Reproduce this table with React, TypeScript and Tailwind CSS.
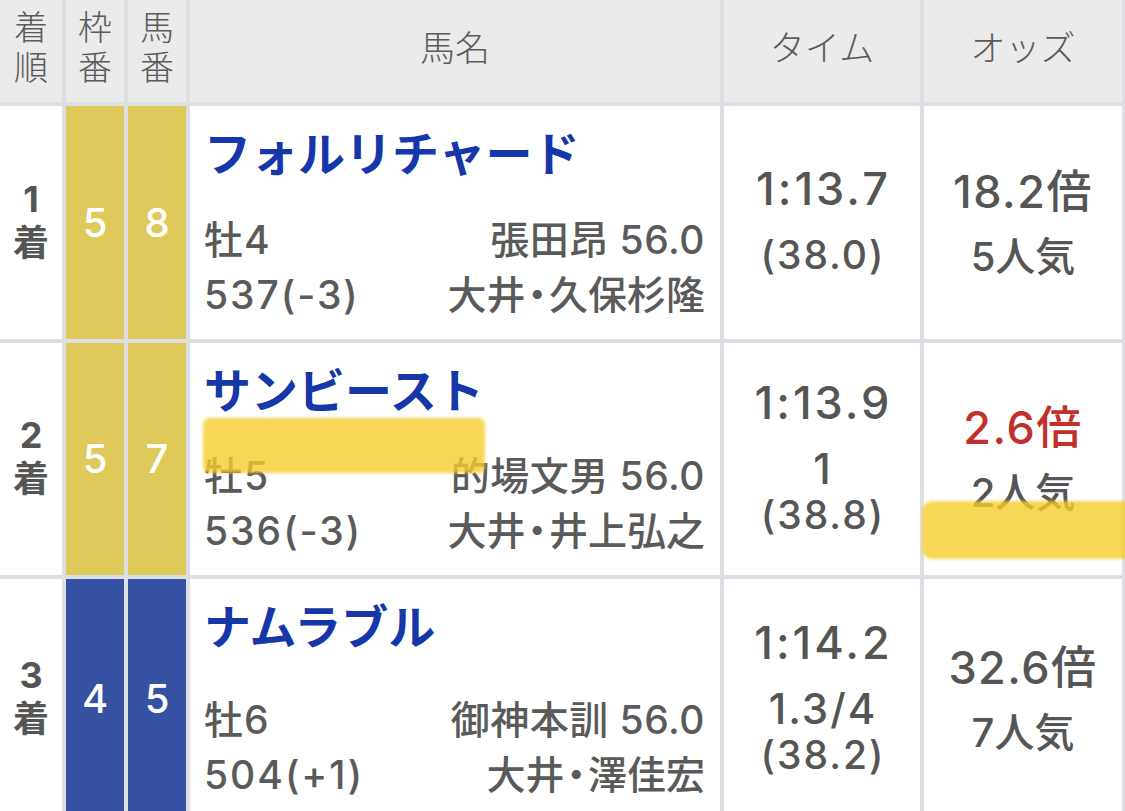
import React from "react";

interface ResultRow {
  rank: string;
  waku: number;
  uma: number;
  wakuColor: "yellow" | "blue";
  name: string;
  sexAge: string;
  jockey: string;
  weight: string;
  trainer: string;
  time: string;
  margin?: string;
  last3f: string;
  odds: string;
  popularity: string;
  favorite?: boolean;
}

const rows: ResultRow[] = [
  {
    rank: "1",
    waku: 5,
    uma: 8,
    wakuColor: "yellow",
    name: "フォルリチャード",
    sexAge: "牡4",
    jockey: "張田昂 56.0",
    weight: "537(-3)",
    trainer: "大井・久保杉隆",
    time: "1:13.7",
    last3f: "(38.0)",
    odds: "18.2倍",
    popularity: "5人気",
  },
  {
    rank: "2",
    waku: 5,
    uma: 7,
    wakuColor: "yellow",
    name: "サンビースト",
    sexAge: "牡5",
    jockey: "的場文男 56.0",
    weight: "536(-3)",
    trainer: "大井・井上弘之",
    time: "1:13.9",
    margin: "1",
    last3f: "(38.8)",
    odds: "2.6倍",
    popularity: "2人気",
    favorite: true,
  },
  {
    rank: "3",
    waku: 4,
    uma: 5,
    wakuColor: "blue",
    name: "ナムラブル",
    sexAge: "牡6",
    jockey: "御神本訓 56.0",
    weight: "504(+1)",
    trainer: "大井・澤佳宏",
    time: "1:14.2",
    margin: "1.3/4",
    last3f: "(38.2)",
    odds: "32.6倍",
    popularity: "7人気",
  },
];

const HeaderCell = ({ children }: { children: React.ReactNode }) => (
  <div className="bg-[#ebebeb] flex items-center justify-center pb-[6px] text-[#5a5a5a] text-[35px] font-light">
    {children}
  </div>
);

const VerticalHead = ({ a, b }: { a: string; b: string }) => (
  <div className="bg-[#ebebeb] flex flex-col items-center justify-center pb-[6px] text-[#5a5a5a] text-[34px] leading-[40px] font-light">
    <span>{a}</span>
    <span>{b}</span>
  </div>
);

// the middle dot sits tighter than a full-width glyph in the original
const Trainer = ({ text }: { text: string }) => {
  const [a, b] = text.split("・");
  return (
    <span>
      {a}
      <span className="[font-feature-settings:'palt'] mx-[2px]">・</span>
      {b}
    </span>
  );
};

export default function App() {
  return (
    <div className="relative w-[1125px] h-[811px] overflow-hidden bg-white [font-family:'Inter','Noto_Sans_CJK_JP',sans-serif]">
      <div className="grid grid-cols-[62px_58px_58px_530px_196px_198px] grid-rows-[102px_233px_232px_240px] gap-[4px] bg-[#dedee5] pr-[3px]">
        <VerticalHead a="着" b="順" />
        <VerticalHead a="枠" b="番" />
        <VerticalHead a="馬" b="番" />
        <HeaderCell>馬名</HeaderCell>
        <HeaderCell>タイム</HeaderCell>
        <HeaderCell>オッズ</HeaderCell>

        {rows.map((r) => (
          <React.Fragment key={r.rank}>
            {/* 着順 */}
            <div className="bg-white flex flex-col items-center justify-center pb-[4px] text-[#555] font-bold text-[36px] leading-[44px]">
              <span>{r.rank}</span>
              <span>着</span>
            </div>

            {/* 枠番 / 馬番 */}
            <div
              className={`flex items-center justify-center text-white font-medium text-[40px] ${
                r.wakuColor === "yellow" ? "bg-[#dfc95a]" : "bg-[#3551a1]"
              }`}
            >
              {r.waku}
            </div>
            <div
              className={`flex items-center justify-center text-white font-medium text-[40px] ${
                r.wakuColor === "yellow" ? "bg-[#dfc95a]" : "bg-[#3551a1]"
              }`}
            >
              {r.uma}
            </div>

            {/* 馬名 + details */}
            <div className="bg-white flex flex-col justify-between pl-[14px] pr-[15px] pt-[20px] pb-[17px]">
              <div className="text-[#1537a8] font-bold text-[47px] leading-[56px]">{r.name}</div>
              <div className="text-[#5a5a5a] font-medium text-[39px] leading-[55px]">
                <div className="flex justify-between">
                  <span className="tracking-[1px]">{r.sexAge}</span>
                  <span className="tracking-[0.5px]">{r.jockey}</span>
                </div>
                <div className="flex justify-between">
                  <span className="tracking-[2px]">{r.weight}</span>
                  <Trainer text={r.trainer} />
                </div>
              </div>
            </div>

            {/* タイム */}
            <div className="bg-white flex flex-col items-center justify-center pb-[6px] text-[#555] font-medium">
              <div className="text-[45px] leading-[56px] tracking-[3px] pl-[3px]">{r.time}</div>
              <div className="mt-[15px] flex flex-col items-center">
                {r.margin && <div className="text-[42px] leading-[46px] tracking-[2px] pl-[2px]">{r.margin}</div>}
                <div className="text-[39px] leading-[46px] tracking-[2px] pl-[2px]">{r.last3f}</div>
              </div>
            </div>

            {/* オッズ */}
            <div className="bg-white flex flex-col items-center justify-center font-medium">
              <div className={`text-[45px] leading-[56px] tracking-[1.5px] ${r.favorite ? "text-[#c0312e]" : "text-[#555]"}`}>
                {r.odds}
              </div>
              <div className="mt-[12px] text-[40px] leading-[50px] text-[#555]">{r.popularity}</div>
            </div>
          </React.Fragment>
        ))}
      </div>

      {/* highlighter marks drawn over the screenshot */}
      <div className="absolute left-[203px] top-[418px] w-[282px] h-[55px] rounded-[6px] bg-[#f7cd2c] opacity-80 blur-[1.5px]" />
      <div className="absolute left-[922px] top-[501px] w-[215px] h-[58px] rounded-l-[10px] bg-[#f7cd2c] opacity-80 blur-[1.5px]" />
    </div>
  );
}
